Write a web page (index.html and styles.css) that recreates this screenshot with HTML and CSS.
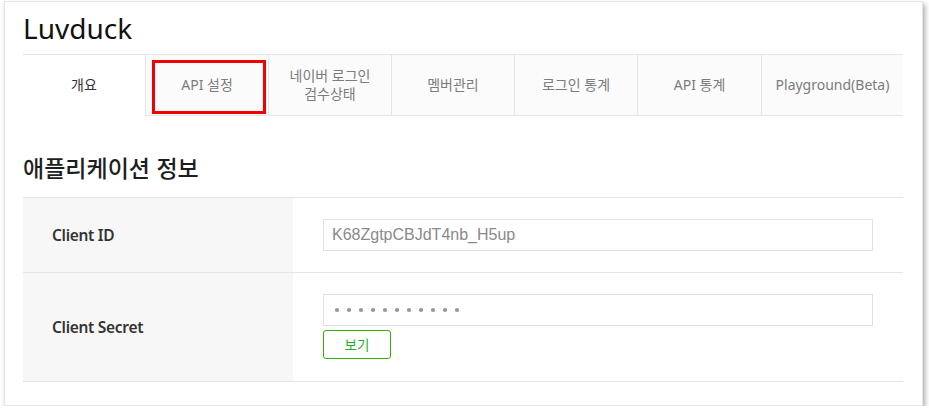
FILE: index.html
```html
<!DOCTYPE html>
<html lang="ko">
<head>
<meta charset="utf-8">
<title>Luvduck</title>
<link rel="stylesheet" href="styles.css">
</head>
<body>
<div class="card">
  <h1 class="app-title">Luvduck</h1>
  <ul class="tabs">
    <li class="tab tab-first active">개요</li>
    <li class="tab tab-mid"><span>API 설정</span><span class="highlight"></span></li>
    <li class="tab tab-mid">네이버 로그인<br>검수상태</li>
    <li class="tab tab-mid">멤버관리</li>
    <li class="tab tab-mid">로그인 통계</li>
    <li class="tab tab-wide">API 통계</li>
    <li class="tab tab-last">Playground(Beta)</li>
  </ul>
  <h2 class="section-title">애플리케이션 정보</h2>
  <div class="info-table">
    <div class="row row-id">
      <div class="label">Client ID</div>
      <div class="value">
        <div class="field">K68ZgtpCBJdT4nb_H5up</div>
      </div>
    </div>
    <div class="row row-secret">
      <div class="label">Client Secret</div>
      <div class="value">
        <div class="field field-dots">
          <span class="dot"></span><span class="dot"></span><span class="dot"></span><span class="dot"></span><span class="dot"></span><span class="dot"></span><span class="dot"></span><span class="dot"></span><span class="dot"></span><span class="dot"></span><span class="dot"></span>
        </div>
        <button class="show-btn" type="button">보기</button>
      </div>
    </div>
  </div>
</div>
</body>
</html>
```

FILE: styles.css
```css
* { box-sizing: border-box; }

html, body {
  margin: 0;
  padding: 0;
  background: #ffffff;
}

body {
  font-family: "Noto Sans", "Noto Sans CJK KR", sans-serif;
  color: #333;
}

.card {
  margin: 1px 0 0 4px;
  width: 919px;
  height: 405px;
  padding: 8px 19px 0 18px;
  background: #fff;
  border: 1px solid #e6e6e6;
  box-shadow: 2px 3px 5px rgba(0, 0, 0, 0.33);
}

.app-title {
  margin: 0;
  height: 36px;
  font-size: 28px;
  line-height: 36px;
  font-weight: normal;
  color: #111;
}

.tabs {
  list-style: none;
  margin: 8px 0 0;
  padding: 0;
  display: flex;
  border-top: 1px solid #e5e5e5;
}

.tab {
  position: relative;
  height: 61px;
  display: flex;
  align-items: center;
  justify-content: center;
  text-align: center;
  font-size: 14px;
  line-height: 18px;
  color: #7c7c7c;
  background: #fbfbfb;
  border-left: 1px solid #e5e5e5;
  border-bottom: 1px solid #e5e5e5;
}

.tab-first { width: 122px; border-left: none; }
.tab-mid { width: 123px; }
.tab-wide { width: 124px; }
.tab-last { flex: 1; }

.tab.active {
  background: #fff;
  color: #333;
  border-bottom-color: transparent;
}

.highlight {
  position: absolute;
  left: 6px;
  top: 5px;
  width: 114px;
  height: 54px;
  border: 3px solid #f00000;
}

.section-title {
  margin: 35px 0 14px;
  height: 32px;
  font-family: "Noto Sans CJK KR", sans-serif;
  font-size: 23px;
  line-height: 32px;
  font-weight: 500;
  color: #1e1e1e;
}

.info-table {
  border-top: 1px solid #e5e5e5;
}

.row {
  display: grid;
  grid-template-columns: 270px 1fr;
  border-bottom: 1px solid #e5e5e5;
}

.label {
  background: #f7f7f7;
  display: flex;
  align-items: center;
  padding-left: 29px;
  font-size: 15.5px;
  font-weight: 600;
  color: #333;
  letter-spacing: -0.3px;
}

.value {
  padding: 21px 30px 21px 30px;
  display: flex;
  flex-direction: column;
  align-items: flex-start;
  gap: 4px;
}

.row-secret .value { padding-bottom: 22px; }

.field {
  width: 100%;
  height: 32px;
  border: 1px solid #e2e2e2;
  padding-left: 8px;
  font-family: "Liberation Sans", sans-serif;
  font-size: 16px;
  line-height: 30px;
  color: #8a8a8a;
  background: #fff;
}

.field-dots {
  display: flex;
  align-items: center;
  gap: 8.5px;
  padding-left: 11px;
}

.dot {
  width: 3.5px;
  height: 3.5px;
  border-radius: 50%;
  background: #999;
}

.show-btn {
  width: 68px;
  height: 29px;
  padding: 0;
  border: 1px solid #2db400;
  border-radius: 3px;
  background: #fff;
  color: #1fae1f;
  font-family: "Noto Sans CJK KR", sans-serif;
  font-size: 13.5px;
  line-height: 27px;
}
```
